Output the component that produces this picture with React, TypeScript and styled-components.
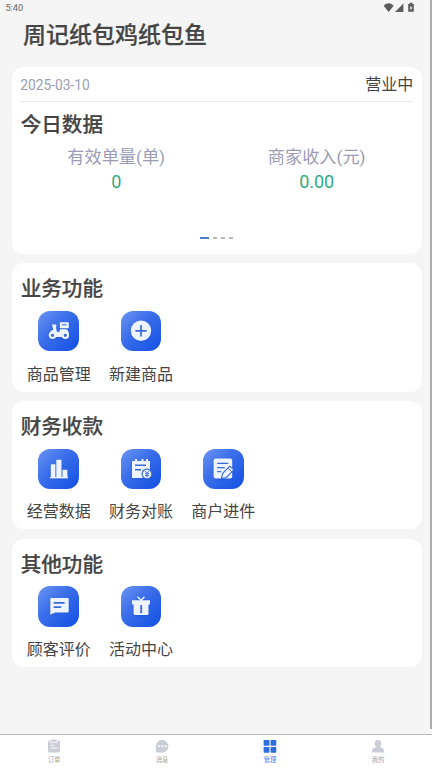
import React from "react";
import styled, { createGlobalStyle } from "styled-components";

const Global = createGlobalStyle`
  * { box-sizing: border-box; }
  body { margin: 0; background: #f5f5f5; }
`;

const Screen = styled.div`
  position: relative;
  display: flex;
  flex-direction: column;
  width: 432px;
  height: 768px;
  overflow: hidden;
  background: #f5f5f5;
  color: #454545;
  font-family: Roboto, "Noto Sans CJK SC", sans-serif;
`;

const StatusBar = styled.div`
  display: flex;
  justify-content: space-between;
  height: 16px;
  padding: 0 16px 0 5.4px;
  font-size: 9.2px;
  line-height: 16px;
  color: #666;
`;

const ShopName = styled.h1`
  height: 38px;
  margin: 0 0 13px 23px;
  font-size: 23px;
  font-weight: 500;
  line-height: 40px;
  -webkit-text-stroke: 0.2px #454545;
`;

const Content = styled.main`
  display: flex;
  flex: 1;
  flex-direction: column;
  gap: 9.3px;
  padding: 0 10px 0 11.7px;
`;

const Card = styled.section<{ $height: number }>`
  display: flex;
  flex-direction: column;
  flex-shrink: 0;
  height: ${(p) => p.$height}px;
  border-radius: 12px;
  background: #fff;
`;

const DayRow = styled.div`
  display: flex;
  align-items: center;
  justify-content: space-between;
  height: 34.5px;
  margin: 0 8.8px 0 8.5px;
  padding-top: 3px;
  border-bottom: 1px solid #e8e8f0;
`;

const DateText = styled.span`
  font-size: 13.8px;
  color: #9a9db5;
`;

const OpenState = styled.span`
  font-size: 16px;
  line-height: 24px;
`;

const Heading = styled.h2<{ $top: number }>`
  height: 30px;
  margin: ${(p) => p.$top}px 0 0 9px;
  font-size: 20.6px;
  font-weight: 500;
  line-height: 30px;
  -webkit-text-stroke: 0.2px #454545;
`;

const Stats = styled.div`
  display: grid;
  grid-template-columns: 209px 192px;
  margin-top: 4px;
  text-align: center;
`;

const StatLabel = styled.div`
  font-size: 17.2px;
  line-height: 26px;
  color: #9a9db5;
`;

const StatValue = styled.div`
  font-size: 18px;
  line-height: 24px;
  color: #2fab83;
`;

const Pager = styled.div`
  display: flex;
  gap: 3.5px;
  align-items: center;
  justify-content: center;
  margin: auto 0 14.8px;
`;

const Dash = styled.i<{ $active?: boolean }>`
  width: ${(p) => (p.$active ? 9 : 4.6)}px;
  height: 2px;
  background: ${(p) => (p.$active ? "#4c80c4" : "#b9b9b9")};
`;

const Tools = styled.div`
  display: flex;
  margin: 6.5px 0 0 5.9px;
`;

const Tool = styled.div`
  display: flex;
  flex-direction: column;
  align-items: center;
  width: 82.3px;
  font-size: 16px;
  line-height: 24px;
  gap: 11.2px;
`;

const Tile = styled.div`
  display: grid;
  place-items: center;
  width: 40.5px;
  height: 40.5px;
  border-radius: 12px;
  background: linear-gradient(135deg, #6c94f2 0%, #3b6eea 42%, #1150e4 100%);
`;

const Glyph = styled.svg`
  width: 24px;
  height: 24px;
  filter: drop-shadow(0 1px 1px #1145bd66);
`;

const TabBar = styled.nav`
  display: grid;
  grid-template-columns: repeat(4, 1fr);
  flex-shrink: 0;
  height: 34px;
  border-top: 1px solid #b9b9b9;
  background: #fff;
`;

const Tab = styled.div<{ $active?: boolean }>`
  display: flex;
  flex-direction: column;
  align-items: center;
  padding-top: 4px;
  font-size: 6.3px;
  line-height: 10px;
  color: ${(p) => (p.$active ? "#4a86ea" : "#a3a3a3")};
  gap: 2px;
`;

const TabGlyph = styled.svg<{ $active?: boolean }>`
  width: 14px;
  height: 14px;
  fill: ${(p) => (p.$active ? "#2e6fe0" : "#cbced9")};
`;

const ScrollThumb = styled.div`
  position: absolute;
  top: 0;
  right: 0;
  width: 2.4px;
  height: 729px;
  background: #adadad;
`;

const ink = "#3768d5";
const pale = "#edf4ff";

const Scooter = () => (
  <Glyph viewBox="0 0 24 24" fill={pale}>
    <path d="M5 5.6h4.4v2.2H9l.8 5h3v-2.6h7.2c1 1.5 1.6 2.8 1.8 4.5l-3.6 3.2H7.2L5 14H3.6v-2L6.2 10.800z" />
    <rect x="12.8" y="3.2" width="9" height="6" rx=".6" />
    <path d="M14.8 5.8h5" stroke={ink} strokeWidth="1" />
    <circle cx="5.5" cy="16.3" r="2.7" fill={ink} stroke={pale} strokeWidth="2.2" />
    <circle cx="18.3" cy="16.3" r="2.7" fill={ink} stroke={pale} strokeWidth="2.2" />
  </Glyph>
);

const Plus = () => (
  <Glyph viewBox="0 0 24 24">
    <circle cx="12" cy="11.8" r="10.2" fill={pale} />
    <path d="M12 6.8v10M7 11.8h10" stroke={ink} strokeWidth="1.7" strokeLinecap="round" />
  </Glyph>
);

const Bars = () => (
  <Glyph viewBox="0 0 24 24" fill={pale}>
    <path d="M3.8 7.200h4.600v13.500H3.800zM9.300 2.700h5.200v18H9.300zM15.400 12.700h5v8h-5z" />
    <path d="M3 20h18v1.4H3z" />
  </Glyph>
);

const Ledger = () => (
  <Glyph viewBox="0 0 24 24">
    <path d="M3 4h3V2h2v2h4.5V2h2v2H17V2h2v2h2v17H3z" fill={pale} />
    <path d="M6 8.2h11M6 12.8h6" stroke={ink} strokeWidth="1.5" />
    <circle cx="18" cy="17" r="4.9" fill={pale} stroke={ink} strokeWidth="1.2" />
    <path d="m16 14 2 2.4 2-2.4M18 16.4v4M16 16.7h4M16 18.5h4" fill="none" stroke={ink} strokeWidth=".9" />
  </Glyph>
);

const EditSheet = () => (
  <Glyph viewBox="0 0 24 24">
    <rect x="2.6" y="1.6" width="18.6" height="19.8" rx="2" fill={pale} />
    <path d="M6.2 6.4h11M6.2 10.6h7.6M6.2 14.6h4" stroke={ink} strokeWidth="1.4" />
    <path d="m10.500 21.600 1-5L18.700 9.200l4.200 3.600-7.600 7.700z" fill={pale} stroke={ink} strokeWidth="1.1" />
    <path d="m17.2 11.2 3.6 3.5" stroke={ink} />
  </Glyph>
);

const Review = () => (
  <Glyph viewBox="0 0 24 24">
    <path d="M4.300 4h16.400q1 0 1 1v12.500q0 1-1 1H8.200L3.300 20.700V5q0-1 1-1z" fill={pale} />
    <path d="M7.4 8.9h9.4M7.4 13.100H13.500" stroke={ink} strokeWidth="1.9" strokeLinecap="round" />
  </Glyph>
);

const Gift = () => (
  <Glyph viewBox="0 0 24 24">
    <path d="M3 6.200h18v4.400h-1.500v9.100q0 1.300-1.300 1.300H5.900q-1.300 0-1.300-1.300v-9.100H3z" fill={pale} />
    <path d="m8.500 2.800 3.500 3.400 3.500-3.400" fill="none" stroke={pale} strokeWidth="1.4" />
    <path d="M12.200 11v8.200" stroke={ink} strokeWidth="1.800" />
  </Glyph>
);

const sections = [
  { title: "业务功能", tools: [["商品管理", Scooter], ["新建商品", Plus]] },
  { title: "财务收款", tools: [["经营数据", Bars], ["财务对账", Ledger], ["商户进件", EditSheet]] },
  { title: "其他功能", tools: [["顾客评价", Review], ["活动中心", Gift]] },
] as { title: string; tools: [string, React.FC][] }[];

export default function App() {
  return (
    <Screen>
      <Global />
      <StatusBar>
        <span>5:40</span>
        <svg width="34" height="16" fill="#5c5c5c">
          <path d="M1.6 5.7Q6.5 1 11.7 5.7L6.6 12z" />
          <path d="M13 12 21.4 3.5V12z" />
          <path d="M26.200 4h1.400V2.800h2.800V4h1.400v7.700h-5.600z" />
          <path d="m29.300 5.500-1.800 3h1.200v2l1.800-3h-1.200z" fill="#eee" />
        </svg>
      </StatusBar>
      <ShopName>周记纸包鸡纸包鱼</ShopName>
      <Content>
        <Card $height={187.2}>
          <DayRow>
            <DateText>2025-03-10</DateText>
            <OpenState>营业中</OpenState>
          </DayRow>
          <Heading $top={8.5}>今日数据</Heading>
          <Stats>
            <div>
              <StatLabel>有效单量(单)</StatLabel>
              <StatValue>0</StatValue>
            </div>
            <div>
              <StatLabel>商家收入(元)</StatLabel>
              <StatValue>0.00</StatValue>
            </div>
          </Stats>
          <Pager>
            <Dash $active />
            <Dash />
            <Dash />
            <Dash />
          </Pager>
        </Card>
        {sections.map((s) => (
          <Card key={s.title} $height={128.3}>
            <Heading $top={11}>{s.title}</Heading>
            <Tools>
              {s.tools.map(([label, Icon]) => (
                <Tool key={label}>
                  <Tile>
                    <Icon />
                  </Tile>
                  <span>{label}</span>
                </Tool>
              ))}
            </Tools>
          </Card>
        ))}
      </Content>
      <TabBar>
        <Tab>
          <TabGlyph viewBox="0 0 14 14">
            <path d="M2 1.500h10q1 0 1 1V12q0 1.500-1.500 1.500h-9Q1 13.500 1 12V2.500q0-1 1-1z" />
            <path d="M3.400 1.500v1.700h7V1.500M3.400 6.300h4M3.400 9h7" fill="none" stroke="#fff" strokeWidth=".9" />
            <rect x="4.4" y=".4" width="5.2" height="2" rx=".5" />
          </TabGlyph>
          <span>订单</span>
        </Tab>
        <Tab>
          <TabGlyph viewBox="0 0 14 14">
            <path d="M7 .8a6.400 6.400 0 1 1 0 12.800H.9V7A6.300 6.300 0 0 1 7 .8z" />
            <g fill="#fff">
              <circle cx="3.9" cy="7.2" r="1" />
              <circle cx="7.2" cy="7.2" r="1" />
              <circle cx="10.5" cy="7.2" r="1" />
            </g>
          </TabGlyph>
          <span>消息</span>
        </Tab>
        <Tab $active>
          <TabGlyph $active viewBox="0 0 14 14">
            <rect x=".6" y="1" width="5.8" height="5.8" rx=".7" />
            <rect x="7.5" y="1" width="5.8" height="5.8" rx=".7" />
            <rect x=".6" y="8" width="5.8" height="5.8" rx=".7" />
            <rect x="7.5" y="8" width="5.8" height="5.8" rx=".7" />
          </TabGlyph>
          <span>管理</span>
        </Tab>
        <Tab>
          <TabGlyph viewBox="0 0 14 14">
            <path d="M7 1C4.600 1 3.400 2.600 3.600 4.700c.1 1.600.8 2.500 1.800 3.200C2.700 8.600.8 9.600.8 12v1.500h12.400V12c0-2.400-1.900-3.400-4.600-4.100 1-.7 1.700-1.600 1.800-3.200C10.600 2.600 9.400 1 7 1z" />
          </TabGlyph>
          <span>我的</span>
        </Tab>
      </TabBar>
      <ScrollThumb />
    </Screen>
  );
}
